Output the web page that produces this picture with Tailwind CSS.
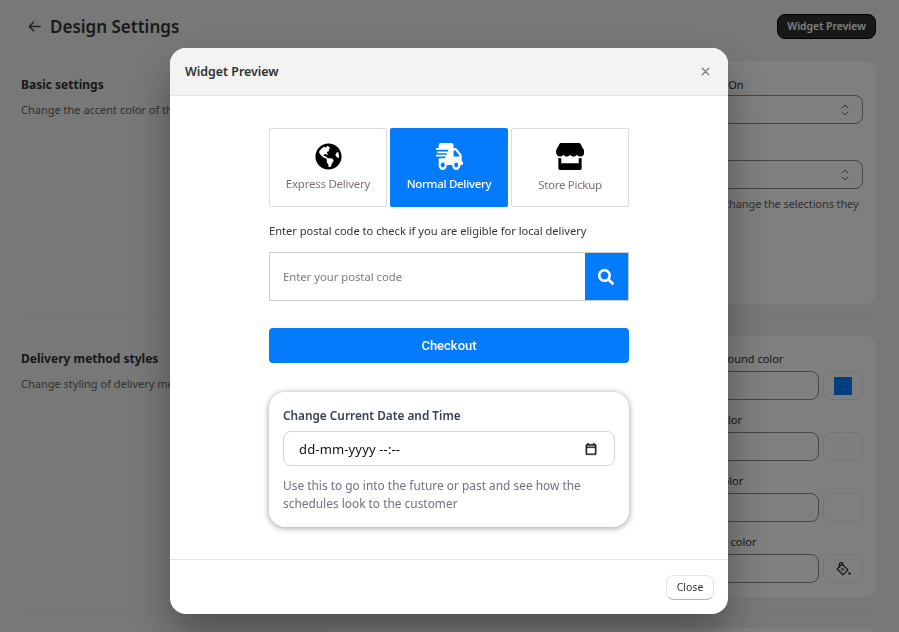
<!DOCTYPE html>
<html lang="en">
<head>
<meta charset="UTF-8">
<title>Design Settings</title>
<script src="https://cdn.jsdelivr.net/npm/@tailwindcss/browser@4"></script>
</head>
<body class="bg-[#f1f1f1] font-['Noto_Sans',sans-serif] text-[11px] text-[#303030] overflow-hidden h-[632px]">

<!-- settings page behind the modal -->
<div class="h-[632px] overflow-hidden pl-[21px] pt-[14px] pr-[23px]">
  <header class="flex items-center justify-between h-[25px] mb-[22px]">
    <div class="flex items-center gap-[6px]">
      <svg class="w-[19px] h-[19px] text-[#4a4a4a] ml-[4px]" viewBox="0 0 20 20" fill="none" stroke="currentColor" stroke-width="1.6" stroke-linecap="round" stroke-linejoin="round"><path d="M16 10H4.500M9 5.500 4.500 10 9 14.500"/></svg>
      <h1 class="text-[17px] font-semibold leading-[25px] text-[#333]">Design Settings</h1>
    </div>
    <button class="h-[25px] w-[99px] rounded-[8px] bg-[#303030] border border-black text-white text-[10.400px] font-semibold">Widget Preview</button>
  </header>

  <section class="flex pb-[15px] border-b border-[#e8e8e8]">
    <div class="w-[300px] pt-[15px]">
      <h2 class="font-bold text-[12px] leading-[18px]">Basic settings</h2>
      <p class="mt-[7px] text-[11px] leading-[18px] text-[#616161] whitespace-nowrap">Change the accent color of the widget</p>
    </div>
    <div class="ml-auto w-[554px] h-[243px] bg-white rounded-[12px] pl-[370px] pr-[13px] pt-[15px]">
      <label class="block leading-[18px]">Visible On</label>
      <div class="mt-[1px] h-[29px] rounded-[8px] border border-[#8a8a8a] flex items-center justify-end pr-[10px]">
        <svg class="w-[14px] h-[14px] text-[#6b6b6b]" viewBox="0 0 14 14" fill="none" stroke="currentColor" stroke-width="1" stroke-linecap="round" stroke-linejoin="round"><path d="M4 5 7 2 10 5M4 9 7 12 10 9"/></svg>
      </div>
      <div class="mt-[36px] h-[29px] rounded-[8px] border border-[#8a8a8a] flex items-center justify-end pr-[10px]">
        <svg class="w-[14px] h-[14px] text-[#6b6b6b]" viewBox="0 0 14 14" fill="none" stroke="currentColor" stroke-width="1" stroke-linecap="round" stroke-linejoin="round"><path d="M4 5 7 2 10 5M4 9 7 12 10 9"/></svg>
      </div>
      <p class="mt-[6px] leading-[18px] tracking-[-0.1px] text-[#616161] whitespace-nowrap">Set to change the selections they</p>
    </div>
  </section>

  <section class="flex pt-[16px] pb-[15px] border-b border-[#e8e8e8]">
    <div class="w-[300px] pt-[14px]">
      <h2 class="font-bold text-[12px] leading-[18px]">Delivery method styles</h2>
      <p class="mt-[7px] text-[11px] leading-[18px] text-[#616161] whitespace-nowrap">Change styling of delivery methods</p>
    </div>
    <div class="ml-auto w-[554px] h-[261px] bg-white rounded-[12px] pl-[370px] pr-[13px] pt-[14px] flex flex-col gap-[11px]">
      <div>
        <label class="block leading-[18px] mb-[3px]">Background color</label>
        <div class="flex gap-[4px]">
          <div class="flex-1 h-[29px] rounded-[8px] border border-[#8a8a8a]"></div>
          <div class="w-[40px] h-[29px] rounded-[8px] border border-[#ebebeb] flex items-center justify-center"><span class="w-[18px] h-[18px] bg-[#0080ff]"></span></div>
        </div>
      </div>
      <div>
        <label class="block leading-[18px] mb-[3px]">Text color</label>
        <div class="flex gap-[4px]">
          <div class="flex-1 h-[29px] rounded-[8px] border border-[#8a8a8a]"></div>
          <div class="w-[40px] h-[29px] rounded-[8px] border border-[#ebebeb] flex items-center justify-center"><span class="w-[18px] h-[18px] bg-[#fdf8f8]"></span></div>
        </div>
      </div>
      <div>
        <label class="block leading-[18px] mb-[3px]">Icon color</label>
        <div class="flex gap-[4px]">
          <div class="flex-1 h-[29px] rounded-[8px] border border-[#8a8a8a]"></div>
          <div class="w-[40px] h-[29px] rounded-[8px] border border-[#ebebeb]"></div>
        </div>
      </div>
      <div>
        <label class="block leading-[18px] mb-[3px]">Border color</label>
        <div class="flex gap-[4px]">
          <div class="flex-1 h-[29px] rounded-[8px] border border-[#8a8a8a]"></div>
          <div class="w-[40px] h-[29px] rounded-[8px] border border-[#ebebeb] flex items-center justify-center">
            <svg class="w-[18px] h-[18px] text-[#222]" viewBox="0 0 20 20" fill="none" stroke="currentColor" stroke-width="1.300" stroke-linejoin="round" stroke-linecap="round"><path d="M9 4.500 15.500 11 10 16.500 3.500 10Z"/><path d="M6 7.500V5a2 2 0 0 1 4 0v1"/><circle cx="9.500" cy="10.500" r="1.200" stroke-width="1"/><circle cx="17.300" cy="15" r="1.300" fill="currentColor" stroke="none"/></svg>
          </div>
        </div>
      </div>
    </div>
  </section>
  <div class="ml-auto mt-[15px] w-[554px] h-[40px] bg-white rounded-[12px]"></div>
</div>

<!-- modal overlay -->
<div class="fixed inset-0 bg-black/50 pt-[48px] pl-[170px]">
  <div class="w-[558px] h-[566px] bg-white rounded-[16px] overflow-hidden flex flex-col shadow-[0_20px_40px_rgba(0,0,0,0.35)]">
    <div class="h-[48px] shrink-0 bg-[#f3f3f3] border-b border-[#e3e3e3] flex items-center justify-between px-[15px]">
      <h3 class="pt-[1px] font-semibold text-[12.400px] text-[#303030]">Widget Preview</h3>
      <svg class="w-[13px] h-[13px] mr-[1px] text-[#7a7a7a]" viewBox="0 0 14 14" fill="none" stroke="currentColor" stroke-width="1.400" stroke-linecap="round"><path d="M3.500 3.500l7 7M10.500 3.500l-7 7"/></svg>
    </div>

    <div class="flex-1 w-[360px] mx-auto pt-[32px]">
      <div class="grid grid-cols-3 gap-[3px]">
        <button class="h-[79px] rounded-[2px] border border-[#dddddd] flex flex-col items-center pt-[14px] text-[#7d7272]">
          <svg class="w-[27px] h-[27px]" viewBox="0 0 496 512" fill="#000"><path d="M248 8C111.030 8 0 119.030 0 256s111.030 248 248 248 248-111.030 248-248S384.970 8 248 8zm82.290 357.600c-3.900 3.880-7.990 7.950-11.310 11.280-2.990 3-5.100 6.700-6.170 10.710-1.510 5.660-2.730 11.380-4.770 16.870l-17.390 46.850c-13.760 3-28 4.690-42.650 4.690v-27.380c1.690-12.620-7.640-36.260-22.630-51.250-6-6-9.370-14.140-9.370-22.630v-32.010c0-11.640-6.270-22.340-16.460-27.970-14.370-7.950-34.810-19.060-48.810-26.110-11.480-5.780-22.100-13.140-31.650-21.750l-.8-.72a114.792 114.792 0 0 1-18.060-20.740c-9.380-13.770-24.660-36.420-34.590-51.140 20.470-45.500 57.360-82.040 103.200-101.890l24.010 12.010C203.480 89.740 216 82.010 216 70.110v-11.300c7.990-1.290 16.120-2.110 24.390-2.420l28.300 28.300c6.250 6.250 6.250 16.380 0 22.630L264 112l-10.340 10.340c-3.120 3.120-3.120 8.190 0 11.310l4.690 4.690c3.120 3.120 3.120 8.190 0 11.310l-8 8a8.008 8.008 0 0 1-5.660 2.340h-8.990c-2.080 0-4.080.81-5.580 2.270l-9.920 9.650a8.008 8.008 0 0 0-1.580 9.310l15.590 31.190c2.660 5.320-1.210 11.580-7.150 11.580h-5.640c-1.930 0-3.790-.7-5.240-1.960l-9.280-8.060a16.017 16.017 0 0 0-15.550-3.100l-31.170 10.390a11.950 11.950 0 0 0-8.170 11.340c0 4.530 2.560 8.660 6.610 10.690l11.080 5.540c9.410 4.710 19.790 7.160 30.310 7.160s22.590 27.290 32 32h66.750c8.490 0 16.620 3.370 22.630 9.370l13.690 13.690a30.503 30.503 0 0 1 8.930 21.570 46.536 46.536 0 0 1-13.720 32.980zM417 274.250c-5.790-1.450-10.840-5-14.150-9.970l-17.980-26.970a23.970 23.970 0 0 1 0-26.620l19.590-29.380c2.320-3.470 5.500-6.290 9.240-8.150l12.980-6.490C440.200 193.590 448 223.870 448 256c0 8.670-.74 17.160-1.820 25.540L417 274.250z"/></svg>
          <span class="mt-[5px] text-[11.500px] tracking-[-0.25px] leading-[18px]">Express Delivery</span>
        </button>
        <button class="h-[79px] rounded-[2px] bg-[#047bfb] flex flex-col items-center pt-[15px] text-white">
          <svg class="w-[27px] h-[27px]" viewBox="0 0 640 512" fill="#fff" preserveAspectRatio="none"><path d="M624 352h-16V243.900c0-12.700-5.100-24.900-14.100-33.900L494 110.100c-9-9-21.200-14.100-33.900-14.100H416V48c0-26.500-21.500-48-48-48H112C85.500 0 64 21.500 64 48v48H8c-4.400 0-8 3.600-8 8v16c0 4.400 3.600 8 8 8h272c4.400 0 8 3.600 8 8v16c0 4.400-3.600 8-8 8H40c-4.400 0-8 3.600-8 8v16c0 4.400 3.600 8 8 8h208c4.400 0 8 3.600 8 8v16c0 4.400-3.600 8-8 8H8c-4.400 0-8 3.600-8 8v16c0 4.400 3.600 8 8 8h208c4.400 0 8 3.600 8 8v16c0 4.400-3.600 8-8 8H64v128c0 53 43 96 96 96s96-43 96-96h128c0 53 43 96 96 96s96-43 96-96h48c8.800 0 16-7.200 16-16v-32c0-8.800-7.200-16-16-16zM160 464c-26.500 0-48-21.500-48-48s21.500-48 48-48 48 21.500 48 48-21.500 48-48 48zm320 0c-26.500 0-48-21.500-48-48s21.500-48 48-48 48 21.500 48 48-21.500 48-48 48zm80-208H416V144h44.100l99.900 99.900V256z"/></svg>
          <span class="mt-[5px] text-[11.500px] tracking-[-0.3px] leading-[18px] font-medium">Normal Delivery</span>
        </button>
        <button class="h-[79px] rounded-[2px] border border-[#dddddd] flex flex-col items-center pt-[14px] text-[#7d7272]">
          <svg class="w-[28px] h-[27px]" viewBox="0 0 616 512" fill="#000" preserveAspectRatio="none"><path d="M602 118.600L537.100 15C531.300 5.700 521 0 510 0H106C95 0 84.700 5.700 78.900 15L14 118.600c-33.900 54.100-3.900 129.300 59.400 137.900 4.600.6 9.200.9 13.700.9 29.900 0 56.400-13.100 74.600-33.400 18.200 20.300 44.800 33.400 74.600 33.400 29.900 0 56.400-13.100 74.600-33.400 18.200 20.300 44.800 33.400 74.600 33.400 29.900 0 56.400-13.100 74.600-33.400 18.300 20.300 44.800 33.400 74.600 33.400 4.600 0 9.100-.3 13.700-.9 63.500-8.500 93.600-83.700 59.600-137.900zM529.500 288c-10 0-19.900-1.500-29.500-3.800V384H116v-99.800c-9.600 2.200-19.500 3.800-29.500 3.800-6 0-12.100-.4-18-1.200-5.600-.8-11.100-2.100-16.400-3.600V480c0 17.700 14.300 32 32 32h448c17.700 0 32-14.300 32-32V283.200c-5.400 1.600-10.800 2.900-16.400 3.600-6.100.8-12.100 1.200-18.200 1.200z"/></svg>
          <span class="mt-[6px] text-[11.500px] tracking-[-0.3px] leading-[18px]">Store Pickup</span>
        </button>
      </div>

      <p class="mt-[15px] text-[11.100px] leading-[18px] text-[#333]">Enter postal code to check if you are eligible for local delivery</p>

      <div class="mt-[12px] h-[49px] border border-[#cccccc] flex items-stretch">
        <div class="flex-1 flex items-center pl-[13px] pt-[2px] text-[11.250px] text-[#7b7b7b]">Enter your postal code</div>
        <div class="w-[43px] bg-[#047bfb] flex items-center justify-center pr-[1px]">
          <svg class="w-[16px] h-[16px]" viewBox="0 0 512 512" fill="#fff"><path d="M505 442.700L405.300 343c-4.500-4.500-10.600-7-17-7H372c27.600-35.300 44-79.700 44-128C416 93.100 322.900 0 208 0S0 93.100 0 208s93.100 208 208 208c48.300 0 92.700-16.400 128-44v16.300c0 6.400 2.500 12.500 7 17l99.700 99.700c9.400 9.400 24.600 9.400 33.900 0l28.300-28.300c9.400-9.400 9.400-24.600.1-34zM208 336c-70.700 0-128-57.200-128-128 0-70.700 57.200-128 128-128 70.700 0 128 57.200 128 128 0 70.700-57.200 128-128 128z"/></svg>
        </div>
      </div>

      <button class="mt-[27px] w-full h-[35px] rounded-[4px] bg-[#047bfb] text-white text-[13px] font-medium font-['Roboto',sans-serif]">Checkout</button>

      <div class="mt-[29px] h-[135px] rounded-[16px] bg-white px-[14px] pt-[14px] shadow-[0_1px_6px_rgba(0,0,0,0.4)]">
        <label class="block text-[11.800px] leading-[18px] font-semibold text-[#374151]">Change Current Date and Time</label>
        <div class="mt-[7px] h-[35px] rounded-[8px] border border-[#d1d5db] flex items-center justify-between pl-[15px] pr-[16px]">
          <span class="pt-[3px] text-[13px] tracking-[0.15px] text-[#111]">dd-mm-yyyy --:--</span>
          <svg class="w-[14px] h-[14px]" viewBox="0 0 24 24" fill="#111" stroke="#111" stroke-width="0.600"><path d="M19 4h-1V2h-2v2H8V2H6v2H5c-1.110 0-1.990.9-1.990 2L3 20c0 1.100.89 2 2 2h14c1.100 0 2-.9 2-2V6c0-1.100-.9-2-2-2zm0 16H5V10h14v10zm0-12H5V6h14v2z"/></svg>
        </div>
        <p class="mt-[10px] text-[11.900px] leading-[18px] text-[#6b7280]">Use this to go into the future or past and see how the schedules look to the customer</p>
      </div>
    </div>

    <div class="h-[55px] shrink-0 border-t border-[#e3e3e3] flex items-center justify-end pr-[14px]">
      <button class="w-[48px] h-[25px] pt-[1px] rounded-[8px] bg-white border border-[#e3e3e3] border-b-[#b5b5b5] text-[10.500px] text-[#303030]">Close</button>
    </div>
  </div>
</div>
</body>
</html>
